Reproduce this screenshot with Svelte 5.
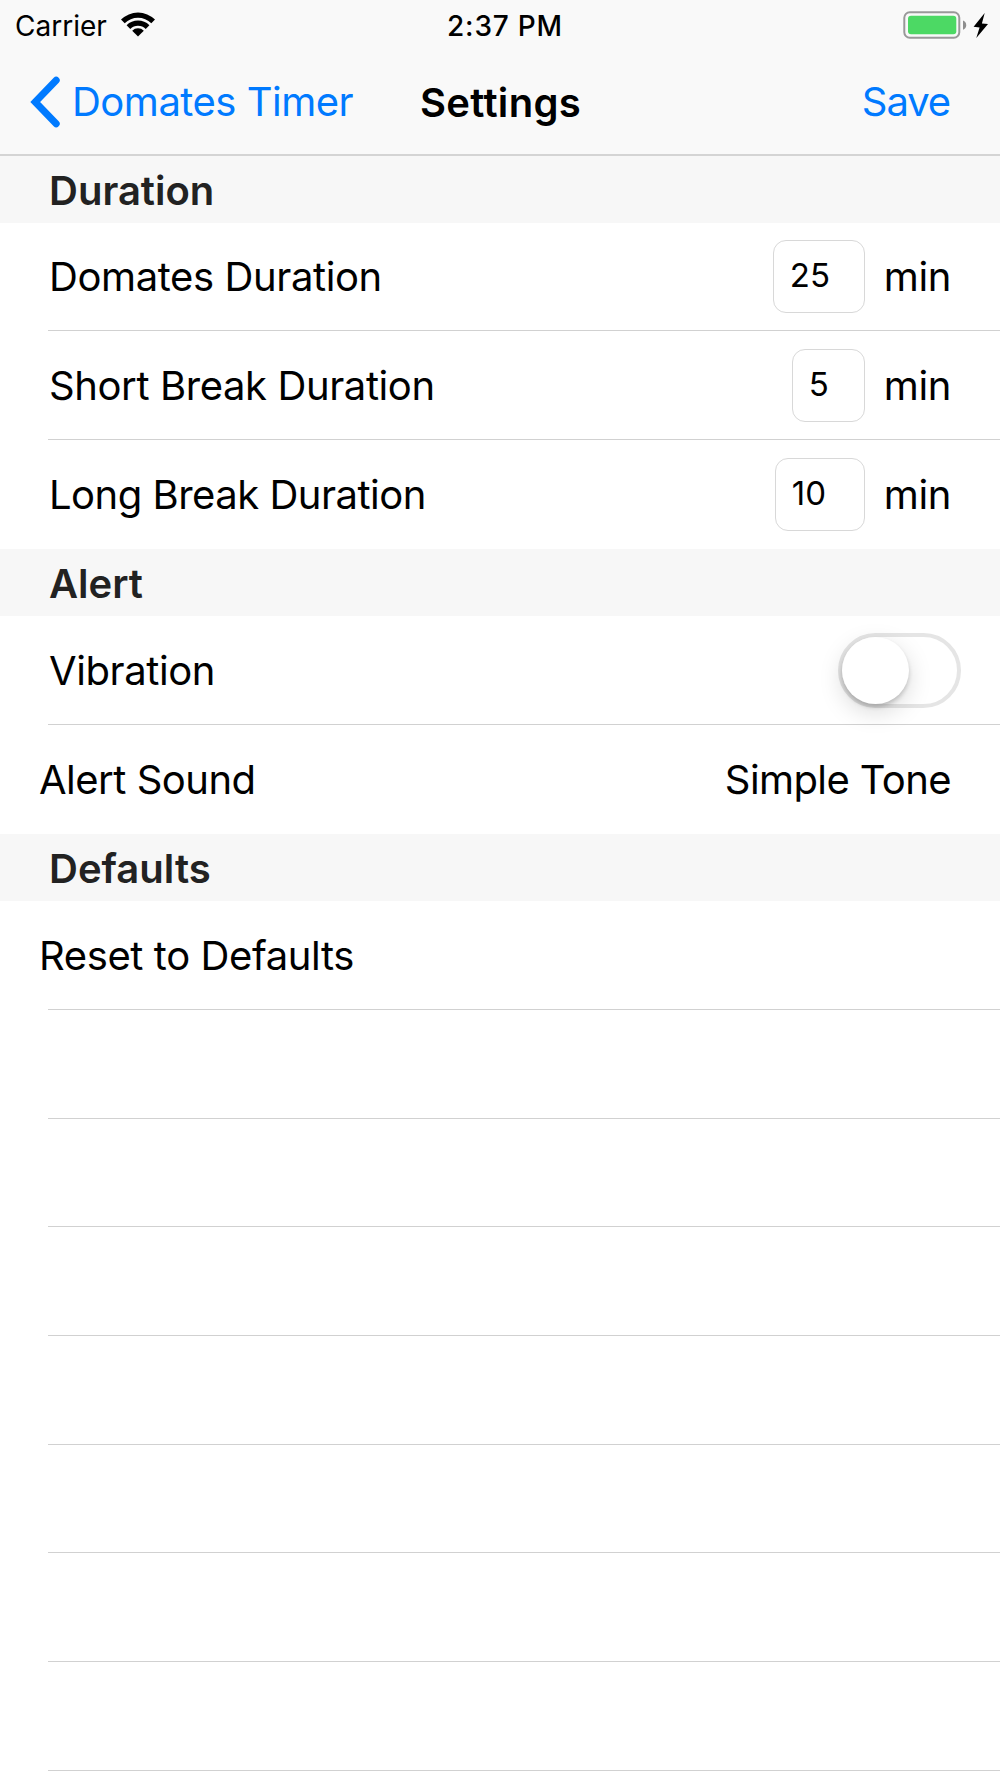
<script lang="ts">
	const durations = [
		{label: "Domates Duration", value: 25, width: 92},
		{label: "Short Break Duration", value: 5, width: 73},
		{label: "Long Break Duration", value: 10, width: 90}
	]
	const fillers = [1, 2, 3, 4, 5, 6, 7]

	let vibration = $state(false)
</script>

<div class="screen">
	<header>
		<div class="status">
			<div class="carrier">
				<span>Carrier</span>
				<svg class="wifi" viewBox="0 0 34 25" width="34" height="25">
					<path d="M0 7.6 A24 24 0 0 1 34 7.6 L30.3 11.3 A18.8 18.8 0 0 0 3.7 11.3 Z" />
					<path d="M5.6 13.2 A16.3 16.3 0 0 1 28.4 13.2 L24.7 16.9 A11 11 0 0 0 9.3 16.9 Z" />
					<path d="M11.2 18.7 A8.3 8.3 0 0 1 22.8 18.7 L17 24.6 Z" />
				</svg>
			</div>
			<div class="time">2:37 PM</div>
			<div class="power">
				<svg viewBox="0 0 86 28" width="86" height="28">
					<rect x="1.3" y="1.3" width="55" height="25.4" rx="5.5" fill="none" stroke="#999" stroke-width="2" />
					<rect x="5" y="4.8" width="48.3" height="18.4" rx="3" fill="#4cd964" />
					<path d="M60 9.6 Q63.2 11 63.2 14.2 Q63.2 17.4 60 18.8 Z" fill="#8e8e8e" />
					<path d="M81.7 2 L70.6 15.8 L76.6 16.4 L73.3 27 L85 12.9 L78.9 12.5 Z" />
				</svg>
			</div>
		</div>
		<nav>
			<button class="back">
				<svg viewBox="0 0 30 52" width="30" height="52">
					<path d="M26.2 4.3 L5.2 26 L26.2 47.7" />
				</svg>
				<span>Domates Timer</span>
			</button>
			<h1>Settings</h1>
			<button class="save">Save</button>
		</nav>
	</header>

	<h2 class="first">Duration</h2>
	{#each durations as item, i}
		<div class="row" class:last={i === durations.length - 1}>
			<span class="label">{item.label}</span>
			<span class="field" style:width="{item.width}px">{item.value}</span>
			<span class="unit">min</span>
		</div>
	{/each}

	<h2>Alert</h2>
	<div class="row">
		<span class="label">Vibration</span>
		<button
			class="switch"
			class:on={vibration}
			aria-label="Vibration"
			onclick={() => vibration = !vibration}
		><span class="knob"></span></button>
	</div>
	<div class="row link last">
		<span class="label">Alert Sound</span>
		<span class="value">Simple Tone</span>
	</div>

	<h2>Defaults</h2>
	<div class="row link">
		<span class="label">Reset to Defaults</span>
	</div>
	{#each fillers as n (n)}
		<div class="row"></div>
	{/each}
</div>

<style>
	:global(body) {
		background: #fff;
	}

	.screen {
		width: 1000px;
		height: 1778px;
		overflow: hidden;
		background: #fff;
		color: #000;
		font-family: Inter, "Liberation Sans", sans-serif;
		font-size: 40px;
		line-height: 1.2;
	}

	button {
		border: 0;
		padding: 0;
		background: none;
		font: inherit;
		letter-spacing: inherit;
	}

	header {
		box-sizing: border-box;
		height: 156px;
		background: #f9f9f9;
		border-bottom: 2px solid #d4d4d4;
	}

	.status {
		box-sizing: border-box;
		display: grid;
		grid-template-columns: 1fr auto 1fr;
		align-items: center;
		height: 52px;
		padding: 1px 11px 0 15px;
		font-size: 28px;
	}

	.carrier {
		display: flex;
		align-items: center;
		gap: 14px;
	}

	.wifi {
		margin-top: -4px;
	}

	.time {
		padding-left: 6px;
		font-weight: 500;
		letter-spacing: 0.8px;
	}

	.power {
		display: flex;
		justify-content: flex-end;
		margin-top: -4px;
	}

	nav {
		display: grid;
		grid-template-columns: 1fr auto 1fr;
		align-items: center;
		height: 100px;
		padding: 0 50px;
	}

	.back {
		display: flex;
		align-items: center;
		gap: 12px;
		margin-left: -20px;
		color: #007aff;
		letter-spacing: -0.5px;
	}

	.back path {
		fill: none;
		stroke: #007aff;
		stroke-width: 7;
		stroke-linecap: round;
	}

	h1 {
		margin: 0;
		padding: 2px 0 0 1px;
		font-size: 40px;
		font-weight: 600;
		letter-spacing: 0.3px;
	}

	.save {
		justify-self: end;
		color: #007aff;
		letter-spacing: -1.1px;
	}

	h2 {
		box-sizing: border-box;
		height: 67.6px;
		margin: 0;
		padding: 11px 0 0 49px;
		background: #f7f7f7;
		color: #222;
		font-size: 40px;
		font-weight: 600;
	}

	.first {
		height: 66.6px;
	}

	.row {
		box-sizing: border-box;
		display: flex;
		align-items: center;
		height: 108.7px;
		margin-left: 48px;
		padding: 2px 49px 0 1px;
		border-bottom: 1px solid #d1d1d1;
		letter-spacing: -0.4px;
	}

	.last {
		border-bottom-color: transparent;
	}

	.last .label {
		letter-spacing: -0.5px;
	}

	.label {
		flex: 1;
	}

	.link .label {
		margin-left: -10px;
	}

	.value {
		letter-spacing: -0.6px;
	}

	.field {
		box-sizing: border-box;
		height: 73px;
		margin: -1px 19px 0 0;
		padding: 15px 0 0 16px;
		border: 1px solid #d8d8d8;
		border-radius: 13px;
		font-size: 33px;
		letter-spacing: 0;
	}

	.switch {
		box-sizing: border-box;
		width: 123px;
		height: 75px;
		margin: -1px -10px 0 0;
		border: 4px solid #e5e5e5;
		border-radius: 38px;
	}

	.knob {
		display: block;
		width: 67px;
		height: 67px;
		border-radius: 50%;
		background: #fff;
		box-shadow: 0 3px 4px rgba(0, 0, 0, 0.18), 0 8px 24px rgba(0, 0, 0, 0.15);
	}

	.on {
		border-color: #4cd964;
		background: #4cd964;
	}

	.on .knob {
		margin-left: auto;
	}
</style>
